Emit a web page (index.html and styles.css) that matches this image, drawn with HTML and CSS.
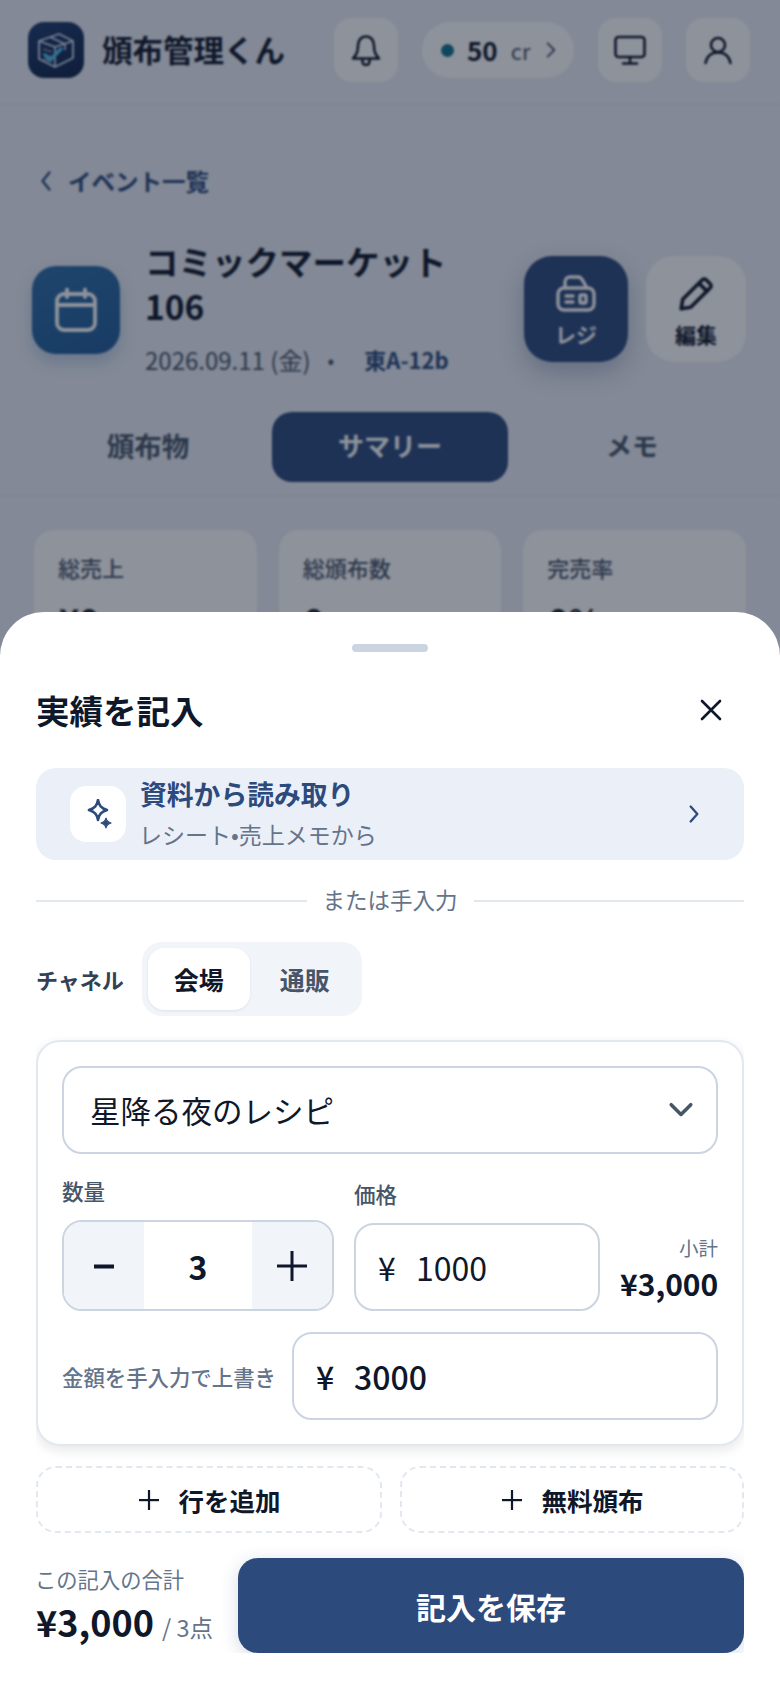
FILE: index.html
```html
<!DOCTYPE html>
<html lang="ja">
<head>
<meta charset="utf-8">
<title>頒布管理くん</title>
<link rel="stylesheet" href="styles.css">
</head>
<body>
<div class="page">
  <header class="top">
    <div class="logo">
      <svg viewBox="0 0 56 56" width="56" height="56" fill="none">
        <path d="M11 19 31 12 45 19V36L27 45 11 37Z" stroke="#d5e2f2" stroke-width="1.8" stroke-linejoin="round"/>
        <path d="M11 19 27 25 45 19M27 25V45M22 15 37 22V28" stroke="#d5e2f2" stroke-width="1.6" stroke-linejoin="round"/>
        <path d="M15 27 24 30M15 32 24 35M15 37 24 40" stroke="#a9bdd8" stroke-width="1.2"/>
        <path d="M17 33 22 38 33 27" stroke="#4cc3f5" stroke-width="3.4" stroke-linecap="round" stroke-linejoin="round"/>
      </svg>
    </div>
    <div class="brand">頒布管理くん</div>
    <div class="top-actions">
      <button class="tool">
        <svg viewBox="0 0 32 32" width="32" height="32" fill="none" class="ink-stroke"><path d="M16 2.500c-5 0-8 4-8 9 0 8-2.500 10-5 13h26c-2.500-3-5-5-5-13 0-5-3-9-8-9z"/><path d="M12.500 26v1.500a3.500 3.500 0 0 0 7 0V26"/></svg>
      </button>
      <div class="credit">
        <span class="credit-dot"></span>
        <span class="credit-num">50</span>
        <span class="credit-unit">cr</span>
        <svg viewBox="0 0 12 20" width="10" height="18" fill="none" class="muted-stroke"><path d="M2 2l8 8-8 8"/></svg>
      </div>
      <button class="tool">
        <svg viewBox="0 0 32 32" width="32" height="32" fill="none" class="ink-stroke"><rect x="1.500" y="3" width="29" height="20" rx="3"/><path d="M16 23v6M9 29.500h14"/></svg>
      </button>
      <button class="tool">
        <svg viewBox="0 0 32 32" width="32" height="32" fill="none" class="ink-stroke"><circle cx="16" cy="11" r="7"/><path d="M3.500 29c1.500-7 6.500-10.500 12.500-10.500S27 22 28.500 29"/></svg>
      </button>
    </div>
  </header>

  <nav class="back">
    <svg viewBox="0 0 14 24" width="12" height="22" fill="none" class="navy-stroke"><path d="M11 2 3 12l8 10"/></svg>
    <span>イベント一覧</span>
  </nav>

  <section class="event">
    <div class="event-icon">
      <svg viewBox="0 0 42 44" width="42" height="44" fill="none" class="cal"><rect x="2" y="6" width="38" height="36" rx="7"/><path d="M2 17h38M12 1v8M30 1v8"/></svg>
    </div>
    <div class="event-text">
      <h1 class="event-title">コミックマーケット<br>106</h1>
      <div class="event-meta">
        <span>2026.09.11 (金)</span>
        <span class="meta-dot">•</span>
        <b class="booth">東A-12b</b>
      </div>
    </div>
    <div class="event-actions">
      <button class="action action-primary">
        <svg viewBox="0 0 40 38" width="40" height="38" fill="none" class="reg"><rect x="2" y="14" width="36" height="22" rx="6"/><path d="M9 14V8a5 5 0 0 1 5-5h8c3 0 4 2 5 4l4 7"/><path d="M10 22h7M10 28h7"/><rect x="24" y="21" width="6" height="8" rx="1.500"/></svg>
        <span>レジ</span>
      </button>
      <button class="action action-plain">
        <svg viewBox="0 0 34 34" width="36" height="36" fill="none" class="ink-stroke pencil"><path d="M3 31l1.500-9L23 3.500a2.500 2.500 0 0 1 3.500 0l4 4a2.500 2.500 0 0 1 0 3.500L12 29.500zM20 7l7.500 7.500"/></svg>
        <span>編集</span>
      </button>
    </div>
  </section>

  <div class="tabs">
    <div class="tab tab-kanji">頒布物</div>
    <div class="tab tab-on">サマリー</div>
    <div class="tab">メモ</div>
  </div>

  <section class="stats">
    <div class="stat"><div class="stat-label">総売上</div><div class="stat-value">¥0</div></div>
    <div class="stat"><div class="stat-label">総頒布数</div><div class="stat-value">0</div></div>
    <div class="stat"><div class="stat-label">完売率</div><div class="stat-value">0%</div></div>
  </section>

  <div class="scrim"></div>

  <aside class="sheet">
    <div class="handle"></div>
    <div class="sheet-head">
      <h2 class="sheet-title">実績を記入</h2>
      <svg viewBox="0 0 24 24" width="24" height="24" fill="none" class="ink-stroke"><path d="M3 3l18 18M21 3 3 21"/></svg>
    </div>
    <div class="sheet-body">
      <div class="import">
        <div class="import-icon">
          <svg viewBox="0 0 30 30" width="30" height="30" class="spark"><path d="M15 1c1 5.500 3 8 9 10-6 2-8 4.500-9 10-1-5.500-3-8-9-10 6-2 8-4.500 9-10z" fill="none" stroke="#2c4a7c" stroke-width="2.600" stroke-linejoin="round"/><path d="M23 19c.6 3 1.500 4 5 5-3.500 1-4.400 2-5 5-.6-3-1.500-4-5-5 3.500-1 4.400-2 5-5z" fill="#2c4a7c" stroke="#2c4a7c" stroke-width="1.200" stroke-linejoin="round"/></svg>
        </div>
        <div class="import-text">
          <div class="import-title">資料から読み取り</div>
          <div class="import-sub">レシート•売上メモから</div>
        </div>
        <svg viewBox="0 0 14 24" width="12" height="20" fill="none" class="navy-stroke"><path d="M3 3l8 9-8 9"/></svg>
      </div>

      <div class="divider"><span>または手入力</span></div>

      <div class="channel">
        <span class="channel-label">チャネル</span>
        <div class="segment">
          <div class="seg seg-on">会場</div>
          <div class="seg">通販</div>
        </div>
      </div>

      <div class="card">
        <div class="select">
          <span>星降る夜のレシピ</span>
          <svg viewBox="0 0 28 18" width="26" height="16" fill="none" class="select-arrow"><path d="M3 3l11 11L25 3"/></svg>
        </div>
        <div class="line">
          <div class="field">
            <div class="field-label">数量</div>
            <div class="stepper">
              <div class="step">
                <svg viewBox="0 0 22 22" width="22" height="22" class="ink-fill"><rect x="1" y="9.500" width="20" height="4"/></svg>
              </div>
              <div class="qty">3</div>
              <div class="step">
                <svg viewBox="0 0 30 30" width="30" height="30" class="ink-fill"><rect x="0" y="13.500" width="30" height="3"/><rect x="13.500" y="0" width="3" height="30"/></svg>
              </div>
            </div>
          </div>
          <div class="field">
            <div class="field-label">価格</div>
            <div class="money money-price"><span class="yen">¥</span><span>1000</span></div>
          </div>
          <div class="subtotal">
            <div class="subtotal-label">小計</div>
            <div class="subtotal-value">¥3,000</div>
          </div>
        </div>
        <div class="override">
          <span class="override-label">金額を手入力で上書き</span>
          <div class="money money-over"><span class="yen">¥</span><span>3000</span></div>
        </div>
      </div>

      <div class="adds">
        <div class="add"><svg viewBox="0 0 20 20" width="20" height="20" class="ink-fill"><rect x="0" y="9" width="20" height="2.200"/><rect x="8.900" y="0" width="2.200" height="20"/></svg><span>行を追加</span></div>
        <div class="add"><svg viewBox="0 0 20 20" width="20" height="20" class="ink-fill"><rect x="0" y="9" width="20" height="2.200"/><rect x="8.900" y="0" width="2.200" height="20"/></svg><span>無料頒布</span></div>
      </div>

      <div class="foot">
        <div class="total">
          <div class="total-label">この記入の合計</div>
          <div class="total-line"><b class="total-value">¥3,000</b><span class="total-count">/ 3点</span></div>
        </div>
        <button class="save">記入を保存</button>
      </div>
    </div>
  </aside>
</div>
</body>
</html>
```
FILE: styles.css
```css
* { box-sizing: border-box; }
html, body { margin: 0; padding: 0; }
body {
  font-family: "Noto Sans CJK JP", "Noto Sans", sans-serif;
  color: #0f172a;
  background: #eaeef5;
}
button { font: inherit; border: 0; padding: 0; color: inherit; }
h1, h2 { margin: 0; }

.ink-stroke path, .ink-stroke rect, .ink-stroke circle { stroke: #0f172a; stroke-width: 2.6; stroke-linecap: round; stroke-linejoin: round; }
.muted-stroke path { stroke: #475569; stroke-width: 2.2; stroke-linecap: round; stroke-linejoin: round; }
.navy-stroke path { stroke: #2c4a7c; stroke-width: 2.8; stroke-linecap: round; stroke-linejoin: round; }
.ink-fill rect { fill: #0f172a; }

.page {
  position: relative;
  width: 780px;
  height: 1688px;
  overflow: hidden;
  background: #eaeef5;
}

/* header */
.top {
  height: 105px;
  padding: 0 30px 4px 28px;
  display: flex;
  align-items: center;
  border-bottom: 1px solid #dfe5ee;
}
.logo {
  width: 56px;
  height: 56px;
  border-radius: 16px;
  background: linear-gradient(160deg, #1f3d6e, #0f2347);
  flex: none;
}
.logo svg { display: block; }
.brand {
  margin-left: 18px;
  margin-top: -2px;
  font-size: 30.500px;
  font-weight: 700;
  line-height: 40px;
  color: #0f172a;
}
.top-actions {
  margin-left: auto;
  display: flex;
  align-items: center;
  gap: 24px;
}
.tool {
  width: 64px;
  height: 64px;
  border-radius: 18px;
  background: #ffffff;
  display: flex;
  align-items: center;
  justify-content: center;
}
.credit {
  width: 152px;
  height: 56px;
  border-radius: 28px;
  background: #ffffff;
  display: flex;
  align-items: center;
  padding-left: 19px;
}
.credit-dot { width: 13px; height: 13px; border-radius: 50%; background: #0e7490; }
.credit-num { margin-left: 13px; font-size: 26px; font-weight: 700; line-height: 34px; }
.credit-unit { margin-left: 13px; font-size: 22px; color: #475569; line-height: 34px; }
.credit svg { margin-left: 16px; }

/* back link */
.back {
  margin-top: 60px;
  padding-left: 40px;
  height: 32px;
  display: flex;
  align-items: center;
  gap: 16px;
  font-size: 23.500px;
  font-weight: 700;
  color: #2c4a7c;
}

/* event header */
.event {
  margin-top: 43px;
  padding: 0 34px 0 32px;
  height: 138px;
  display: flex;
  align-items: center;
}
.event-icon {
  width: 88px;
  height: 88px;
  flex: none;
  margin-top: 2px;
  border-radius: 24px;
  background: linear-gradient(160deg, #2f6ea8, #205c98);
  box-shadow: 0 8px 16px rgba(42, 108, 176, .25);
  display: flex;
  align-items: center;
  justify-content: center;
}
.cal rect, .cal path { stroke: #ffffff; stroke-width: 3.800; stroke-linecap: round; stroke-linejoin: round; }
.reg rect, .reg path { stroke: #ffffff; stroke-width: 3.400; stroke-linecap: round; stroke-linejoin: round; }
.event-text { margin-left: 25px; flex: 1; min-width: 0; align-self: flex-start; }
.event-title { margin-top: -2px; font-size: 33.500px; line-height: 45px; font-weight: 700; color: #0f172a; }
.event-meta {
  margin-top: 15px;
  display: flex;
  align-items: center;
  height: 32px;
  font-size: 24px;
  color: #475569;
  white-space: nowrap;
}
.meta-dot { margin-left: 17px; font-size: 20px; }
.booth { margin-left: 30px; font-size: 22px; color: #2c4a7c; font-weight: 700; }
.event-actions { display: flex; gap: 18px; flex: none; }
.action {
  height: 106px;
  border-radius: 28px;
  display: flex;
  flex-direction: column;
  align-items: center;
  justify-content: flex-start;
  padding-top: 18px;
  font-size: 21px;
  font-weight: 700;
}
.action span { line-height: 30px; margin-top: 7px; }
.action-primary {
  width: 104px;
  background: #2c4a7c;
  color: #ffffff;
  box-shadow: 0 10px 24px rgba(44, 74, 124, .3);
}
.action-plain { width: 100px; background: #ffffff; color: #0f172a; padding-top: 20px; }
.action-plain span { margin-top: 7px; }
.pencil path { stroke-width: 3.400; }

/* tabs */
.tabs {
  margin-top: 34px;
  padding: 0 30px 13px;
  display: grid;
  grid-template-columns: repeat(3, 1fr);
  gap: 6px;
  border-bottom: 1px solid #dfe5ee;
}
.tab {
  height: 70px;
  padding-bottom: 5px;
  border-radius: 20px;
  display: flex;
  align-items: center;
  justify-content: center;
  font-size: 26px;
  font-weight: 700;
  color: #475569;
}
.tab-kanji { font-size: 27.500px; }
.tab-on { background: #2c4a7c; color: #ffffff; }

/* stat cards */
.stats {
  margin-top: 34px;
  padding: 0 34px;
  display: grid;
  grid-template-columns: repeat(3, 1fr);
  gap: 22px;
}
.stat {
  height: 150px;
  border-radius: 20px;
  background: #ffffff;
  padding: 21px 25px;
}
.stat-label { font-size: 22px; line-height: 32px; color: #475569; font-weight: 500; margin-left: -1px; }
.stat-value { margin-top: 15px; font-size: 34px; line-height: 44px; font-weight: 700; }

/* overlay */
.scrim {
  position: absolute;
  inset: 0;
  background: rgba(15, 23, 42, .47);
  backdrop-filter: blur(1px);
}

/* sheet */
.sheet {
  position: absolute;
  left: 0;
  right: 0;
  top: 612px;
  bottom: 0;
  background: #ffffff;
  border-radius: 44px 44px 0 0;
}
.handle {
  width: 76px;
  height: 8px;
  margin: 32px auto 0;
  border-radius: 4px;
  background: #cbd5e1;
}
.sheet-head {
  margin-top: 34px;
  height: 48px;
  padding: 0 57px 0 36px;
  display: flex;
  align-items: center;
  justify-content: space-between;
}
.sheet-title { font-size: 33.500px; line-height: 48px; font-weight: 700; }
.sheet-body {
  margin: 34px 36px 0;
  height: 885px;
  overflow: hidden;
}

.import {
  height: 92px;
  border-radius: 20px;
  background: #ebeff8;
  padding: 0 44px 0 34px;
  display: flex;
  align-items: center;
}
.import-icon {
  width: 56px;
  height: 56px;
  border-radius: 16px;
  background: #ffffff;
  display: flex;
  align-items: center;
  justify-content: center;
  flex: none;
}
.import-text { margin-left: 14px; flex: 1; }
.import-title { font-size: 26.800px; line-height: 36px; font-weight: 700; color: #2c4a7c; margin-top: -1px; }
.import-sub { font-size: 23px; line-height: 34px; color: #64748b; margin-top: 5px; margin-left: -1px; }

.divider {
  margin-top: 25px;
  height: 32px;
  display: flex;
  align-items: center;
  gap: 16px;
  font-size: 22.500px;
  color: #64748b;
}
.divider span { margin-top: -4px; }
.divider::before, .divider::after {
  content: "";
  flex: 1;
  height: 2px;
  background: #e2e8f0;
}

.channel { margin-top: 25px; display: flex; align-items: center; gap: 18px; }
.channel-label { font-size: 22px; font-weight: 700; color: #334155; }
.segment {
  width: 220px;
  height: 74px;
  padding: 6px;
  border-radius: 20px;
  background: #f1f4f9;
  display: flex;
}
.seg {
  width: 102px;
  border-radius: 16px;
  display: flex;
  align-items: center;
  justify-content: center;
  font-size: 25px;
  font-weight: 700;
  color: #475569;
}
.seg:last-child { width: 106px; padding-left: 4px; }
.seg-on { background: #ffffff; color: #0f172a; box-shadow: 0 1px 3px rgba(15, 23, 42, .08); }

.card {
  margin-top: 24px;
  border: 2px solid #e2e8f0;
  border-radius: 24px;
  background: #ffffff;
  padding: 24px;
  box-shadow: 0 4px 12px rgba(15, 23, 42, .1);
}
.select {
  height: 88px;
  border: 2px solid #cbd5e1;
  border-radius: 20px;
  padding: 0 22px 0 26px;
  display: flex;
  align-items: center;
  justify-content: space-between;
  font-size: 30.500px;
}
.select-arrow path { stroke: #475569; stroke-width: 4; stroke-linecap: round; stroke-linejoin: round; }
.line {
  margin-top: 23px;
  display: grid;
  grid-template-columns: 272px 246px 98px;
  gap: 20px;
  align-items: end;
}
.field-label { font-size: 21.500px; line-height: 28px; color: #475569; font-weight: 500; margin-bottom: 15px; }
.stepper {
  height: 91px;
  border: 2px solid #cbd5e1;
  border-radius: 20px;
  overflow: hidden;
  display: grid;
  grid-template-columns: 80px 1fr 80px;
}
.step { background: #f1f4f9; display: flex; align-items: center; justify-content: center; }
.qty { display: flex; align-items: center; justify-content: center; font-size: 32px; font-weight: 700; }
.money {
  border: 2px solid #cbd5e1;
  border-radius: 20px;
  display: flex;
  align-items: center;
  font-size: 32px;
}
.money-price { height: 88px; padding-left: 22px; }
.money-over { height: 88px; flex: 1; padding-left: 22px; font-weight: 500; }
.yen { width: 38px; font-size: 32px; }
.subtotal { text-align: right; padding-bottom: 7px; }
.subtotal-label { font-size: 19.500px; line-height: 28px; color: #64748b; }
.subtotal-value { font-size: 30px; line-height: 42px; font-weight: 700; white-space: nowrap; }
.override { margin-top: 21px; display: flex; align-items: center; gap: 16px; }
.override-label { font-size: 21.400px; font-weight: 500; color: #64748b; white-space: nowrap; width: 214px; }

.adds { margin-top: 20px; display: grid; grid-template-columns: 346px 344px; gap: 18px; }
.add {
  height: 67px;
  padding-left: 2px;
  border: 2px dashed #e2e8f0;
  border-radius: 20px;
  display: flex;
  align-items: center;
  justify-content: center;
  gap: 19px;
  font-size: 25.500px;
  font-weight: 700;
}

.foot { margin-top: 25px; height: 95px; display: flex; align-items: center; justify-content: space-between; }
.total { width: 190px; }
.total-label { font-size: 21.300px; line-height: 32px; color: #64748b; white-space: nowrap; margin-top: -2px; margin-left: -1px; }
.total-line { display: flex; align-items: baseline; gap: 8px; white-space: nowrap; }
.total-value { font-size: 36px; line-height: 52px; font-weight: 700; }
.total-count { font-size: 23.500px; color: #64748b; }
.save {
  width: 506px;
  height: 95px;
  border-radius: 20px;
  background: #2c4a7c;
  color: #ffffff;
  font-size: 30px;
  font-weight: 700;
  box-shadow: 0 4px 18px rgba(44, 74, 124, .2);
}
```
